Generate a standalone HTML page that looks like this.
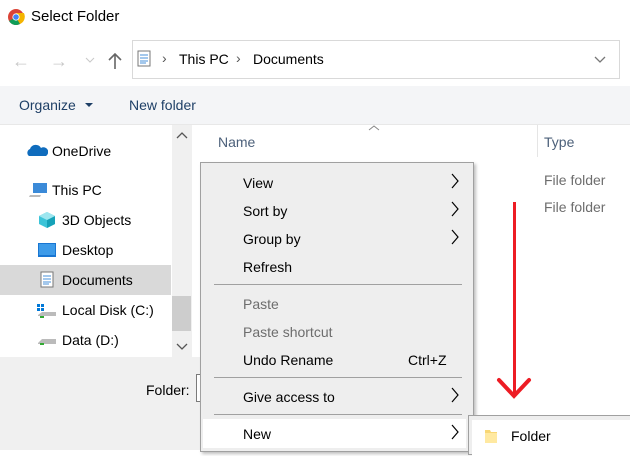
<!DOCTYPE html>
<html><head><meta charset="utf-8"><style>
*{margin:0;padding:0;box-sizing:border-box}
body{width:630px;height:450px;overflow:hidden;position:relative;background:#fff;font-family:"Liberation Sans",sans-serif;font-size:14px;color:#000}
.a{position:absolute;white-space:nowrap}
.sep{position:absolute;height:1px;background:#a0a0a0;left:13px;width:248px}
.chev{position:absolute;left:249px}
</style></head><body>
<!-- title -->
<svg class="a" style="left:7px;top:8px" width="18" height="18" viewBox="0 0 18 18"><circle cx="9" cy="9" r="8" fill="#db4437"/><path d="M9 9 L2.1 13 A8 8 0 0 0 13 16 Z" fill="#0f9d58"/><path d="M9 9 L13 16 A8 8 0 0 0 16.9 5 L9 5Z" fill="#f4b400"/><circle cx="9" cy="9" r="3.6" fill="#fff"/><circle cx="9" cy="9" r="2.8" fill="#4285f4"/></svg>
<div class="a" style="left:31px;top:8px;font-size:15px">Select Folder</div>
<!-- nav -->
<div class="a" style="left:12px;top:51px;color:#c8c8c8;font-size:18px">&#8592;</div>
<div class="a" style="left:50px;top:51px;color:#c8c8c8;font-size:18px">&#8594;</div>
<svg class="a" style="left:85px;top:57px" width="10" height="6"><path d="M1 1 L5 5 L9 1" stroke="#c8c8c8" fill="none"/></svg>
<svg class="a" style="left:108px;top:52px" width="14" height="18"><path d="M7 17 V2 M1 8 L7 2 L13 8" stroke="#666" stroke-width="1.6" fill="none"/></svg>
<div class="a" style="left:132px;top:40px;width:488px;height:39px;border:1px solid #d9d9d9;border-right:1px solid #d9d9d9"></div>
<div class="a" style="left:590px;top:41px;width:30px;height:37px;border-left:1px solid #d9d9d9;display:none"></div>
<svg class="a" style="left:137px;top:50px" width="15" height="18"><rect x="1" y="1" width="12" height="15" fill="#fff" stroke="#777"/><path d="M3 5h8M3 8h8M3 11h8M3 13h6" stroke="#4a90d9"/></svg>
<div class="a" style="left:162px;top:50px;color:#555">&#8250;</div>
<div class="a" style="left:179px;top:51px">This PC</div>
<div class="a" style="left:236px;top:50px;color:#555">&#8250;</div>
<div class="a" style="left:253px;top:51px">Documents</div>
<svg class="a" style="left:594px;top:56px" width="12" height="8"><path d="M1 1 L6 6 L11 1" stroke="#777" stroke-width="1.3" fill="none"/></svg>
<div class="a" style="left:619px;top:40px;width:1px;height:39px;background:#d9d9d9"></div>
<!-- toolbar -->
<div class="a" style="left:0;top:86px;width:630px;height:38px;background:#f4f5f7"></div>
<div class="a" style="left:19px;top:97px;color:#1e3f66">Organize</div>
<div class="a" style="left:85px;top:103px;border:4px solid transparent;border-top:4px solid #1e3f66;border-bottom:0"></div>
<div class="a" style="left:129px;top:97px;color:#1e3f66">New folder</div>
<div class="a" style="left:0;top:124px;width:630px;height:1px;background:#e8e8e8"></div>
<!-- left pane -->
<div class="a" style="left:0;top:125px;width:172px;height:232px;background:#fff"></div>
<div class="a" style="left:172px;top:125px;width:20px;height:232px;background:#f0f0f0"></div>
<div class="a" style="left:172px;top:296px;width:19px;height:35px;background:#cdcdcd"></div>
<svg class="a" style="left:176px;top:132px" width="12" height="8"><path d="M1 6 L6 1 L11 6" stroke="#555" stroke-width="1.3" fill="none"/></svg>
<svg class="a" style="left:176px;top:343px" width="12" height="8"><path d="M1 1 L6 6 L11 1" stroke="#555" stroke-width="1.3" fill="none"/></svg>
<div class="a" style="left:0;top:265px;width:171px;height:30px;background:#d9d9d9"></div>
<svg class="a" style="left:26px;top:143px" width="22" height="14"><path d="M3 13 A4 4 0 0 1 4 6 A6 6 0 0 1 15 5 A4 4 0 0 1 20 13Z" fill="#0f6cbd"/></svg>
<div class="a" style="left:52px;top:143px">OneDrive</div>
<svg class="a" style="left:28px;top:182px" width="20" height="17"><rect x="5" y="1" width="14" height="10" fill="#3b8ad8"/><path d="M1 15 L12 15 L13 13 L2 13Z" fill="#bbb"/></svg>
<div class="a" style="left:52px;top:182px">This PC</div>
<svg class="a" style="left:38px;top:211px" width="18" height="18"><path d="M9 1 L17 5 L17 13 L9 17 L1 13 L1 5Z" fill="#3cc4d8"/><path d="M9 9 L17 5 L17 13 L9 17Z" fill="#16a2b8"/><path d="M1 5 L9 1 L17 5 L9 9Z" fill="#9de6ef"/></svg>
<div class="a" style="left:62px;top:212px">3D Objects</div>
<svg class="a" style="left:38px;top:243px" width="18" height="15"><rect x="0" y="0" width="18" height="14" fill="#1976d2"/><rect x="1" y="1" width="16" height="11" fill="#3d9be9"/></svg>
<div class="a" style="left:62px;top:242px">Desktop</div>
<svg class="a" style="left:40px;top:271px" width="15" height="18"><rect x="1" y="1" width="12" height="15" fill="#fff" stroke="#777"/><path d="M3 5h8M3 8h8M3 11h8M3 13h6" stroke="#4a90d9"/></svg>
<div class="a" style="left:62px;top:272px">Documents</div>
<svg class="a" style="left:36px;top:303px" width="21" height="16"><rect x="1" y="1" width="3" height="3" fill="#0078d7"/><rect x="5" y="1" width="3" height="3" fill="#0078d7"/><rect x="1" y="5" width="3" height="3" fill="#0078d7"/><rect x="5" y="5" width="3" height="3" fill="#0078d7"/><path d="M2 12 L6 9 L20 9 L20 13 L2 13Z" fill="#bbb"/><rect x="4" y="13" width="4" height="2" fill="#3a3"/></svg>
<div class="a" style="left:62px;top:302px">Local Disk (C:)</div>
<svg class="a" style="left:36px;top:335px" width="21" height="12"><path d="M2 8 L6 4 L20 4 L20 9 L2 9Z" fill="#bbb"/><rect x="4" y="8" width="4" height="2" fill="#3a3"/></svg>
<div class="a" style="left:62px;top:332px">Data (D:)</div>
<!-- bottom area -->
<div class="a" style="left:0;top:357px;width:200px;height:93px;background:#f0f0f0"></div>
<div class="a" style="left:146px;top:382px">Folder:</div>
<div class="a" style="left:196px;top:374px;width:6px;height:28px;border:1px solid #7a7a7a;border-right:0;background:#fff"></div>
<!-- right header -->
<div class="a" style="left:218px;top:134px;color:#4c607a">Name</div>
<svg class="a" style="left:368px;top:125px" width="12" height="6"><path d="M1 5 L6 1 L11 5" stroke="#888" fill="none"/></svg>
<div class="a" style="left:537px;top:125px;width:1px;height:32px;background:#e5e5e5"></div>
<div class="a" style="left:544px;top:134px;color:#4c607a">Type</div>
<div class="a" style="left:544px;top:172px;color:#6d6d6d">File folder</div>
<div class="a" style="left:544px;top:199px;color:#6d6d6d">File folder</div>
<!-- red arrow -->
<div class="a" style="left:513px;top:202px;width:3px;height:194px;background:#ed1c24"></div>
<svg class="a" style="left:496px;top:376px" width="38" height="26"><path d="M3 4 L18 20 L33 4" stroke="#ed1c24" stroke-width="4" fill="none" stroke-linecap="round"/></svg>
<!-- context menu -->
<div class="a" style="left:200px;top:162px;width:274px;height:290px;background:#eeeeee;border:1px solid #a0a0a0;box-shadow:2px 2px 3px rgba(0,0,0,.25)">
 <div class="a" style="left:42px;top:12px">View</div>
 <div class="a" style="left:42px;top:40px">Sort by</div>
 <div class="a" style="left:42px;top:68px">Group by</div>
 <div class="a" style="left:42px;top:96px">Refresh</div>
 <div class="sep" style="top:121px"></div>
 <div class="a" style="left:42px;top:133px;color:#6d6d6d">Paste</div>
 <div class="a" style="left:42px;top:161px;color:#6d6d6d">Paste shortcut</div>
 <div class="a" style="left:42px;top:189px">Undo Rename</div>
 <div class="a" style="left:207px;top:189px">Ctrl+Z</div>
 <div class="sep" style="top:214px"></div>
 <div class="a" style="left:42px;top:226px">Give access to</div>
 <div class="sep" style="top:251px"></div>
 <div class="a" style="left:2px;top:256px;width:263px;height:29px;background:#fff"></div>
 <div class="a" style="left:42px;top:263px">New</div>
 <svg class="chev" style="top:10px" width="10" height="16"><path d="M2 1 L8 8 L2 15" stroke="#000" stroke-width="1.2" fill="none"/></svg>
 <svg class="chev" style="top:38px" width="10" height="16"><path d="M2 1 L8 8 L2 15" stroke="#000" stroke-width="1.2" fill="none"/></svg>
 <svg class="chev" style="top:66px" width="10" height="16"><path d="M2 1 L8 8 L2 15" stroke="#000" stroke-width="1.2" fill="none"/></svg>
 <svg class="chev" style="top:224px" width="10" height="16"><path d="M2 1 L8 8 L2 15" stroke="#000" stroke-width="1.2" fill="none"/></svg>
 <svg class="chev" style="top:261px" width="10" height="16"><path d="M2 1 L8 8 L2 15" stroke="#000" stroke-width="1.2" fill="none"/></svg>
</div>
<!-- submenu -->
<div class="a" style="left:468px;top:415px;width:170px;height:40px;background:#eeeeee;border:1px solid #a0a0a0">
 <div class="a" style="left:3px;top:4px;width:170px;height:36px;background:#fff"></div>
 <svg class="a" style="left:15px;top:12px" width="14" height="16"><path d="M1 2 L6 2 L7 4 L13 4 L13 15 L1 15Z" fill="#f8d775"/><path d="M1 5 L13 5 L13 15 L1 15Z" fill="#ffe9a1"/></svg>
 <div class="a" style="left:42px;top:12px">Folder</div>
</div>
</body></html>
